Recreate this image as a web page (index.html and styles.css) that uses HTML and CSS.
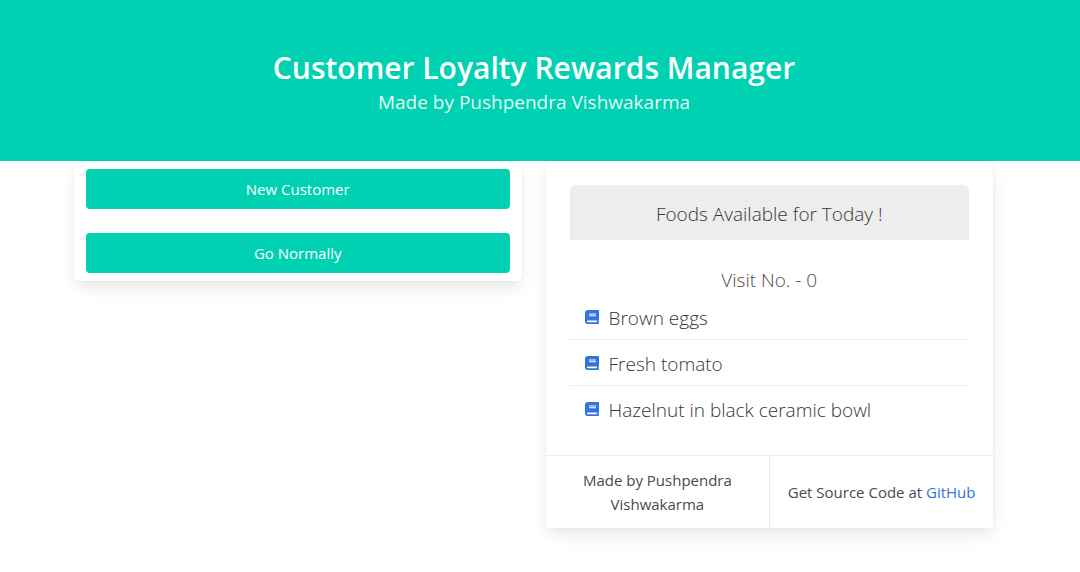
FILE: index.html
```html
<!DOCTYPE html>
<html lang="en">
<head>
<meta charset="utf-8">
<meta name="viewport" content="width=device-width, initial-scale=1">
<title>Customer Loyalty Rewards Manager</title>
<link rel="stylesheet" href="styles.css">
</head>
<body>
<svg class="sprite" aria-hidden="true">
  <symbol id="book" viewBox="0 0 448 512" preserveAspectRatio="none">
    <path fill="currentColor" d="M448 360V24c0-13.3-10.700-24-24-24H96C43 0 0 43 0 96v320c0 53 43 96 96 96h328c13.300 0 24-10.700 24-24v-16c0-7.500-3.500-14.300-8.900-18.700-4.200-15.400-4.200-59.300 0-74.700 5.400-4.300 8.900-11.100 8.900-18.600zM128 134c0-3.300 2.700-6 6-6h212c3.300 0 6 2.700 6 6v20c0 3.300-2.700 6-6 6H134c-3.300 0-6-2.700-6-6v-20zm0 64c0-3.300 2.700-6 6-6h212c3.300 0 6 2.700 6 6v20c0 3.300-2.700 6-6 6H134c-3.300 0-6-2.700-6-6v-20zm253.400 250H96c-17.700 0-32-14.300-32-32 0-17.600 14.400-32 32-32h285.400c-1.900 17.100-1.900 46.900 0 64z"/>
  </symbol>
</svg>
<header class="hero">
  <h1 class="title">Customer Loyalty Rewards Manager</h1>
  <p class="subtitle">Made by Pushpendra Vishwakarma</p>
</header>
<main class="columns">
  <section class="card actions">
    <button class="button" type="button">New Customer</button>
    <button class="button" type="button">Go Normally</button>
  </section>
  <section class="card foods">
    <div class="foods-content">
      <h2 class="panel-heading">Foods Available for Today !</h2>
      <p class="visit">Visit No. - 0</p>
      <ul class="food-list">
        <li class="food"><svg class="icon" aria-hidden="true"><use href="#book"/></svg>Brown eggs</li>
        <li class="food"><svg class="icon" aria-hidden="true"><use href="#book"/></svg>Fresh tomato</li>
        <li class="food"><svg class="icon" aria-hidden="true"><use href="#book"/></svg>Hazelnut in black ceramic bowl</li>
      </ul>
    </div>
    <footer class="card-footer">
      <p class="footer-item">Made by Pushpendra Vishwakarma</p>
      <p class="footer-item">Get Source Code at&nbsp;<a class="link" href="#">GitHub</a></p>
    </footer>
  </section>
</main>
</body>
</html>
```
FILE: styles.css
```css
* {
  box-sizing: border-box;
  margin: 0;
  padding: 0;
}

body {
  font-family: "Segoe UI", "Open Sans", "Noto Sans", sans-serif;
  font-size: 15px;
  line-height: 24px;
  color: #4a4a4a;
  background: #fff;
}

.sprite {
  position: absolute;
  width: 0;
  height: 0;
}

.hero {
  padding: 48px 36px 45px 24px;
  text-align: center;
  color: #fff;
  background: #00d1b2;
}

.title {
  font-size: 30px;
  font-weight: 600;
  line-height: 40px;
}

.subtitle {
  font-size: 19px;
  line-height: 28px;
  color: rgba(255, 255, 255, 0.9);
}

.columns {
  display: grid;
  grid-template-columns: 1fr 1fr;
  align-items: start;
  gap: 24px;
  max-width: 967px;
  margin-right: auto;
  margin-left: 50px;
  padding: 0 24px 44px;
}

.card {
  background: #fff;
  box-shadow: 0 8px 16px -2px rgba(10, 10, 10, 0.1), 0 0 0 1px rgba(10, 10, 10, 0.02);
}

.actions {
  display: grid;
  gap: 24px;
  padding: 8px 12px;
  border-radius: 6px;
}

.button {
  height: 40px;
  border: 0;
  border-radius: 4px;
  font: inherit;
  color: #fff;
  background: #00d1b2;
  cursor: pointer;
}

.foods-content {
  padding: 24px 24px 23px;
}

.panel-heading {
  padding: 15px 16px 12px;
  border-radius: 6px 6px 0 0;
  font-size: 19px;
  font-weight: 300;
  line-height: 28px;
  text-align: center;
  color: #363636;
  background: #ededed;
}

.visit {
  padding-top: 26px;
  font-size: 19px;
  font-weight: 300;
  line-height: 28px;
  text-align: center;
}

.food-list {
  list-style: none;
}

.food {
  display: flex;
  align-items: center;
  gap: 10px;
  height: 46px;
  padding: 2px 15px 0;
  border-bottom: 1px solid #ededed;
  font-size: 19px;
  font-weight: 300;
  color: #363636;
}

.food:last-child {
  border-bottom: 0;
}

.icon {
  width: 14px;
  height: 14px;
  margin-bottom: 2px;
  color: #3273dc;
}

.card-footer {
  display: grid;
  grid-template-columns: 1fr 1fr;
  border-top: 1px solid #ededed;
}

.footer-item {
  display: flex;
  align-items: center;
  justify-content: center;
  padding: 12px;
  text-align: center;
}

.footer-item + .footer-item {
  border-left: 1px solid #ededed;
}

.link {
  color: #3273dc;
  text-decoration: none;
}
```
